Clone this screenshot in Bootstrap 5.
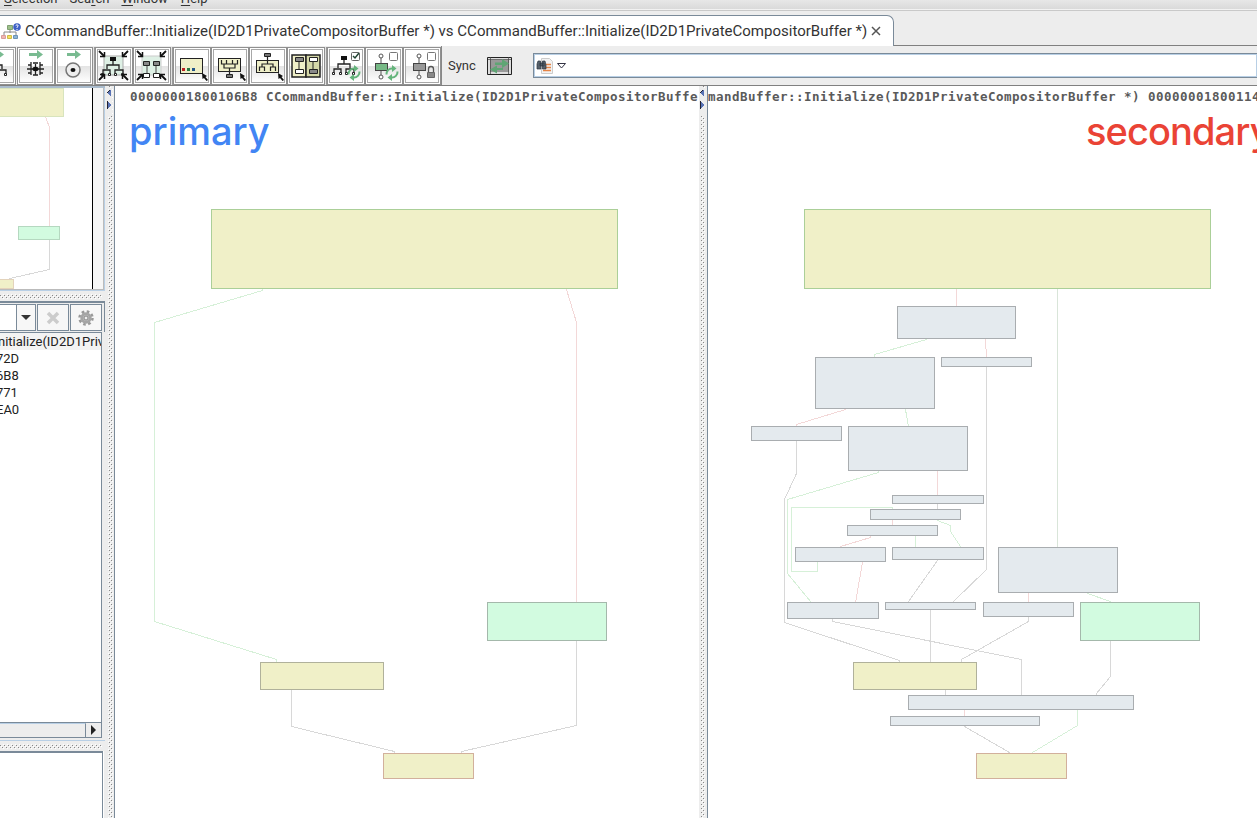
<!DOCTYPE html>
<html lang="en">
<head>
<meta charset="utf-8">
<title>Flow graph comparison</title>
<link href="https://cdn.jsdelivr.net/npm/bootstrap@5.3.0/dist/css/bootstrap.min.css" rel="stylesheet">
<style>
body{height:818px;overflow:hidden;background:#ededed;font-family:Roboto,"Liberation Sans",sans-serif;color:#333;font-size:13px}
svg{display:block;flex:none}
.menus{height:11px;flex:none;background:linear-gradient(#e7e7e7,#dadada 9px,#f2f2f2 9px);border-bottom:1px solid #c9c9c9;line-height:15px}
.menus span{position:relative;top:-9px;white-space:nowrap}
.menus u{text-underline-offset:2px}
.tabrow{height:35px;flex:none;border-bottom:1px solid #808080;padding-top:4px}
.doc-tab{height:31px;width:894px;background:#fff;border-top:1px solid #7a8a99;border-right:1px solid #7a8a99;border-top-right-radius:7px;margin-bottom:-1px;color:#333}
.doc-title{font-size:15.020px;margin-left:4px;white-space:nowrap;width:842px;line-height:20px}
.tools{height:40px;flex:none;border-bottom:1px solid #808080}
.tool{width:38px;height:38px;flex:none;border:1px solid #909090;box-shadow:inset 0 0 0 1px #fff,inset 0 0 0 2px #a8a8a8;background:linear-gradient(#fff 0,#fff 49%,#e4e4e4 51%,#fff 96%);padding:0}
.tool svg{margin:-1px}
.sep{width:2px;height:38px;background:#e2e2e2;border-right:1px solid #999;flex:none}
.query{height:25px;border:1px solid #7a8a99;border-right:0;background:#fff;box-shadow:inset 0 0 0 1px #b8cfe5;margin-left:19px}
.side{width:105px;flex:none}
.overview{height:205px;flex:none;background:#fff;border-top:2px solid #aabccd;border-bottom:1px solid #b8cfe5}
.split-v{width:10px;flex:none;border-right:1px solid #7a8a99;background:#ededed}
.split-v.thin{width:9px}
.filter{height:31px;flex:none;border-top:2px solid #7a8a99;border-right:1px solid #7a8a99;padding-top:1px}
.cell{height:27px;border:1px solid #7a8a99;background:#f7f7f7;flex:none;display:flex;align-items:center;justify-content:center}
.found{border-top:1px solid #7a8a99;border-right:1px solid #7a8a99;background:#fff;width:102px;color:#222;font-size:13px;overflow:hidden;white-space:nowrap}
.found div{height:17px;line-height:17px;text-indent:-4px}
.found div:first-child{background:#f3f3f3;text-indent:-2px}
.edge-r{border-right:1px solid #7a8a99;box-shadow:1px 0 0 #fff}
.graph{background:#fff;overflow:hidden}
.addr{font:bold 12.5px/16px "DejaVu Sans Mono",monospace;letter-spacing:.475px;color:#5a5a5a;white-space:nowrap;height:21px;padding-top:3px}
.which{font:500 38px/49px Inter,"Open Sans",sans-serif;height:49px;white-space:nowrap}
.n rect{stroke-width:1}
.k{fill:#e4eaee;stroke:#a9adb0}.y{fill:#f0f0c8;stroke:#b0b19b}.yg{fill:#f0f0c8;stroke:#abcf98}.yr{fill:#f0f0c8;stroke:#d2b09c}.g{fill:#d2fbe0;stroke:#a4b8ab}
.e,.e path{fill:none;stroke-linecap:square}.eg{stroke:#d6f0d8}.er{stroke:#f3d8d8}.ek{stroke:#d8d8d8}
</style>
</head>
<body class="d-flex flex-column">
<svg width="0" height="0" class="position-absolute"><defs>
<pattern id="dots" width="4" height="4" patternUnits="userSpaceOnUse"><rect width="4" height="4" fill="#eee"/><path d="M0 0h1v1H0zM2 2h1v1H2z" fill="#888"/><path d="M1 1h1v1H1zM3 3h1v1H3z" fill="#fff"/></pattern>
<g id="corners" fill="none" stroke="#111" stroke-width="1.800"><path d="M4 4l5 5M33 4l-5 5M4 33l5-5M33 33l-5-5"/><path stroke-width="1.500" d="M9.500 5v4.500H5M27.500 5v4.500H32M9.500 32v-4.500H5M27.500 32v-4.500H32"/></g>
<g id="tree" fill="none" stroke="#222" stroke-width="1.300"><path d="M18 14v4M12 22v-4h12v4M8 27v-4h7v4M20 27v-4h8v4"/><path fill="#111" stroke="none" d="M15 10h6v4h-6z"/><path fill="#fff" stroke-width="1" d="M6.500 26.500h2v2h-2zM13.500 26.500h2v2h-2zM19.500 26.500h2v2h-2zM26.500 26.500h2v2h-2z"/></g>
<g id="cycle" fill="none" stroke="#65b47c" stroke-width="2"><path d="M21.500 27.500a5.500 5.500 0 0 1 6-6M32.500 24.500a5.500 5.500 0 0 1-6 6"/><path fill="#65b47c" stroke="none" d="M27 18l4.500 3.500L27 25zM27 34l-4.500-3.500L27 27z"/></g>
<path id="arrow" d="M12 6h8V3l6 4.500-6 4.500V9h-8z" fill="#79bb91"/>
<path id="pointer" d="M29 26l5 3-1.500 1 2.500 3-1.500 1-2.500-3-1.500 1z" fill="#111"/>
</defs></svg>

<nav class="menus d-flex overflow-hidden">
<span style="margin-left:4px"><u>S</u>election</span><span style="margin-left:12px">Sea<u>r</u>ch</span><span style="margin-left:12px"><u>W</u>indow</span><span style="margin-left:13px"><u>H</u>elp</span>
</nav>

<div class="tabrow"><div class="doc-tab d-flex align-items-center">
<svg width="21" height="20" viewBox="0 0 21 20"><path d="M10 8v4M4 14v-3h12v3" stroke="#888" fill="none"/><path d="M7.500 4.500h5v4h-5z" fill="#9dbf8a" stroke="#7fa072"/><path d="M1.500 14.500h4v3h-4z" fill="#f0b6b2" stroke="#d99d9b"/><path d="M7.500 14.500h4v3h-4z" fill="#f5e45c" stroke="#cdb94a"/><path d="M13.500 14.500h4v3h-4z" fill="#8fb5d7" stroke="#6d93b6"/><circle cx="17" cy="6" r="3.800" fill="#3d5fc4"/><path d="M15.700 4.500q1.300-1.500 2.500 0 0 1-1.200 1.700v.8M17 8v1" stroke="#fff" fill="none"/></svg>
<span class="doc-title">CCommandBuffer::Initialize(ID2D1PrivateCompositorBuffer *) vs CCommandBuffer::Initialize(ID2D1PrivateCompositorBuffer *)</span>
<svg width="18" height="12" viewBox="0 0 18 12"><path d="M5 2l8 8M13 2l-8 8" stroke="#555" stroke-width="1.500"/></svg>
</div></div>

<div class="tools d-flex align-items-center">
<button class="tool" style="margin-left:-22px"><svg width="38" height="38"><use href="#arrow"/><use href="#tree"/></svg></button>
<button class="tool" style="margin-left:1px"><svg width="38" height="38"><use href="#arrow"/><path d="M10 22h17M18.500 17v11M14 15v13M23 15v13M11 18h3M23 18h3M11 26h3M23 26h3M16 28h5M16 16h5" fill="none" stroke="#222" stroke-width="1.300"/><ellipse cx="18.500" cy="22" rx="3" ry="2.200" fill="#111"/></svg></button>
<button class="tool"><svg width="38" height="38"><use href="#arrow"/><circle cx="18" cy="23" r="7" fill="#eee" stroke="#777" stroke-width="1.500"/><ellipse cx="18" cy="23" rx="2.500" ry="2" fill="#111"/></svg></button>
<div class="sep"></div>
<button class="tool"><svg width="38" height="38"><rect x="9" y="9" width="19" height="19" fill="#def0e5" stroke="#aaa"/><use href="#tree"/><use href="#corners"/></svg></button>
<button class="tool"><svg width="38" height="38"><rect x="9" y="9" width="19" height="19" fill="#def0e5" stroke="#ccc"/><path d="M14 18v9M23 18v9" stroke="#444"/><g stroke="#222"><path fill="#888" d="M10.500 14.500h6v4h-6zM20.500 14.500h6v4h-6z"/><path fill="#fff" d="M10.500 26.500h6v4h-6zM20.500 26.500h6v4h-6z"/></g><use href="#corners"/></svg></button>
<div class="sep"></div>
<button class="tool"><svg width="38" height="38"><rect x="7.500" y="11.500" width="22" height="15" fill="#efefc8" stroke="#222"/><path d="M9 21h3v3H9z" fill="#b22"/><path d="M14 21h3v3h-3z" fill="#2a7c42"/><path d="M19 21h3v3h-3z" fill="#258"/><use href="#pointer"/></svg></button>
<button class="tool"><svg width="38" height="38"><rect x="7.500" y="11.500" width="22" height="13" fill="#efefc8" stroke="#222"/><path d="M10.500 13v4h16v-4M15.500 13v4M21.500 13v4M13 17v4h11v-4M18.500 21v6" fill="none" stroke="#222" stroke-width="1.200"/><path d="M15.500 27.500h6v3h-6z" fill="#777" stroke="#222"/><use href="#pointer"/></svg></button>
<button class="tool"><svg width="38" height="38"><rect x="7.500" y="13.500" width="22" height="12" fill="#efefc8" stroke="#222"/><path d="M18.500 10v7M13 20v-3h11v3M10.500 24v-4h5v4M21.500 24v-4h5v4" fill="none" stroke="#222" stroke-width="1.200"/><path d="M15.500 6.500h6v3h-6z" fill="#777" stroke="#222"/><use href="#pointer"/></svg></button>
<button class="tool"><svg width="38" height="38"><rect x="5" y="8" width="14" height="22" fill="#efefc8" stroke="#222" stroke-width="1.500"/><rect x="19" y="8" width="14" height="22" fill="#d5d8a8" stroke="#222" stroke-width="1.500"/><path d="M12 14v9M26 14v9" stroke="#222"/><g stroke="#222"><path fill="#888" d="M8.500 10.500h8v4h-8zM22.500 22.500h8v4h-8z"/><path fill="#fff" d="M8.500 22.500h8v4h-8zM22.500 10.500h8v4h-8z"/></g></svg></button>
<div class="sep"></div>
<button class="tool"><svg width="38" height="38"><g transform="translate(-1 -1)"><use href="#tree"/></g><rect x="24.500" y="5.500" width="8" height="8" rx="1" fill="#fff" stroke="#666"/><path d="M26 9l2 2 4-5" fill="none" stroke="#243" stroke-width="1.500"/><use href="#cycle"/></svg></button>
<button class="tool"><svg width="38" height="38"><path d="M16 8v23" stroke="#555"/><circle cx="16" cy="9" r="2" fill="#fff" stroke="#555"/><circle cx="16" cy="30" r="2" fill="#fff" stroke="#555"/><rect x="10.500" y="16.500" width="12" height="7" fill="#77b986" stroke="#444"/><rect x="24.500" y="5.500" width="8" height="8" rx="1" fill="#fff" stroke="#777"/><use href="#cycle"/></svg></button>
<button class="tool"><svg width="38" height="38"><path d="M16 8v23" stroke="#555"/><circle cx="16" cy="9" r="2" fill="#fff" stroke="#555"/><circle cx="16" cy="30" r="2" fill="#fff" stroke="#555"/><rect x="10.500" y="16.500" width="12" height="7" fill="#999" stroke="#444"/><rect x="24.500" y="5.500" width="8" height="8" rx="1" fill="#fff" stroke="#777"/><path d="M25.500 25v-3a2.500 2.500 0 0 1 5 0v3" fill="none" stroke="#555" stroke-width="1.300"/><path d="M24.500 25.500h7v5h-7z" fill="#888" stroke="#666"/></svg></button>
<div style="border-left:1px solid #888" class="h-100"></div>
<span style="font-size:13px;width:39px;margin-left:6px">Sync</span>
<svg width="27" height="20" viewBox="1 0 27 20"><path d="M1.500 1.500h24v17h-24z" fill="#ddd" stroke="#222"/><path d="M4 4h19v12H4z" fill="#999"/><path d="M2 3.500h23M4.500 1v17M22.500 1v17" stroke="#444" stroke-width=".7"/><path d="M9 6.500h7V3l7 4.500-7 4.500V9H9zM17 14h-6v3.500L4 13.500 11 9.500V12h6z" fill="#5fa574"/></svg>
<div class="query flex-grow-1 d-flex align-items-center">
<svg width="36" height="21" viewBox="0 0 36 21"><path d="M7.500 3.500h8l3 3v12h-11z" fill="#f3f3f3" stroke="#ccc"/><path d="M9 9.500h8M9 12.500h8M9 15.500h8" stroke="#e68445" stroke-width="1.300"/><path d="M4 6h2.500l.5 8H3V9zM8.500 6H11l1 4v4H8.500zM6 8h4v3H6z" fill="#57616b" stroke="#2b3540" stroke-width=".7"/><path d="M23.500 8.500h8l-4 4.500z" fill="#fff" stroke="#334"/></svg>
</div>
</div>

<main class="d-flex flex-grow-1 overflow-hidden">
<aside class="side d-flex flex-column">
<div class="overview"><svg width="105" height="202" viewBox="0 88 105 202" shape-rendering="crispEdges"><path d="M93 88h10v202H93z" fill="#f6f6f6"/><path d="M92.500 88v202" stroke="#000"/><path d="M103.500 88v202" stroke="#bbb"/><path d="M104.500 88v202" stroke="#b8cfe5"/><path d="M0 289.500h104" stroke="#bbb"/><g transform="translate(.5 .5)"><path class="e er" d="M45 116l4 11v99"/><path class="e ek" d="M49 239v30l-40 9v2"/><rect x="-5" y="88" width="68" height="28" fill="#f0f0c8" stroke="#d8e4bd"/><rect x="18" y="226" width="41" height="13" fill="#d2fbe0" stroke="#b5d8c0"/><rect x="-5" y="279" width="18" height="9" fill="#f0f0c8" stroke="#e3d3bb"/></g></svg></div>
<svg width="105" height="10" shape-rendering="crispEdges"><path fill="#ededed" d="M0 0h105v10H0z"/><path fill="url(#dots)" d="M0 3h102v5H0z"/></svg>
<div class="filter d-flex align-items-start">
<div class="cell border-start-0" style="width:17px;background:#fff"></div><div class="cell" style="width:20px;margin-left:-1px"><svg width="12" height="7"><path d="M1 1h10L6 6z" fill="#333"/></svg></div>
<div class="cell" style="width:32px;margin-left:1px"><svg width="14" height="14"><path d="M2 2l10 10M12 2L2 12" stroke="#ccc" stroke-width="3.500"/></svg></div>
<div class="cell" style="width:32px;margin-left:1px"><svg width="18" height="18" viewBox="-9 -9 18 18"><circle r="6.500" fill="none" stroke="#999" stroke-width="2.500" stroke-dasharray="2.600 2.500"/><circle r="4.200" fill="#ccc" stroke="#a5a5a5" stroke-width="3"/><circle r="2" fill="#eee" stroke="#888"/></svg></div>
</div>
<div class="found" style="height:390px"><div>nitialize(ID2D1Priv</div><div>72D</div><div>6B8</div><div>771</div><div>EA0</div></div>
<div class="d-flex" style="height:16px;flex:none;width:102px;border:1px solid #7a8a99;border-left:0"><div style="width:86px;border-top:1px solid #b8cfe5;border-right:1px solid #7a8a99"></div><svg width="15" height="14"><path d="M5 2l5 5-5 5z" fill="#222"/></svg></div>
<div style="height:3px;flex:none;border-bottom:1px solid #b8cfe5"></div>
<svg width="105" height="10" shape-rendering="crispEdges"><path fill="#ededed" d="M0 0h105v10H0z"/><path fill="url(#dots)" d="M0 3h102v5H0z"/></svg>
<div class="flex-grow-1 bg-white edge-r" style="width:103px;border-top:2px solid #7a8a99"></div>
</aside>
<div class="split-v"><svg width="9" height="732" shape-rendering="crispEdges"><path fill="url(#dots)" d="M3 0h5v732H3z"/><path d="M2 2h5v28H2z" fill="#ededed"/><path d="M6 3v8L2 7zM2 15l4 4-4 4z" fill="#5872b5"/><path d="M2.500 15v8M5 4L2 7" stroke="#223"/></svg></div>

<section class="graph" style="width:584px;flex:none">
<div class="addr" style="padding-left:15px">00000001800106B8 CCommandBuffer::Initialize(ID2D1PrivateCompositorBuffer *)</div>
<div class="which" style="color:#4285f4;padding-left:14px">primary</div>
<svg width="584" height="662" viewBox="115 156 584 662" shape-rendering="crispEdges"><g transform="translate(.5 .5)">
<path class="e eg" d="M262 289v1L154 322v299l122 38v3"/><path class="e er" d="M566 289l10 33v280"/><path class="e ek" d="M576 641v84l-115 26v2M291 690v36l103 25v2"/>
<g class="n"><rect class="yg" x="211" y="209" width="406" height="79"/><rect class="g" x="487" y="602" width="119" height="38"/><rect class="y" x="260" y="662" width="123" height="27"/><rect class="yr" x="383" y="753" width="90" height="25"/></g>
</g></svg>
</section>
<div class="split-v thin"><svg width="8" height="732" shape-rendering="crispEdges"><path fill="url(#dots)" d="M2 0h4v732H2z"/><path d="M1 2h5v28H1z" fill="#ededed"/><path d="M5 3v8L1 7zM1 15l4 4-4 4z" fill="#5872b5"/><path d="M1.500 15v8M4 4L1 7" stroke="#223"/></svg></div>

<section class="graph flex-grow-1">
<div class="addr">mandBuffer::Initialize(ID2D1PrivateCompositorBuffer *) 0000000180011460</div>
<div class="which" style="color:#ea4335;padding-left:378px;letter-spacing:-.9px">secondary</div>
<svg width="549" height="662" viewBox="708 156 549 662" shape-rendering="crispEdges"><g transform="translate(.5 .5)">
<g class="e er"><path d="M956 289v17M985 338v9l1 3v7M845 409l-49 15v2M937 471v24M892 520v5M870 536v1l-30 9v1M862 562l-7 40M1028 593v9M964 710v6"/></g>
<g class="e ek"><path d="M986 367v202l-33 32v1M796 441v32l-12 26v123l115 38v3M937 504v5M937 560l-29 41v1M930 610v52M832 619v2l189 38v36M1028 617v4l-67 38v3M1110 641v35l-14 17v2M945 690v5M964 726l45 26v1"/></g>
<g class="e eg"><path d="M1057 289v258" stroke="#d9e5d9"/><path d="M926 339l-52 15v3M905 409l3 17M878 471v1l-91 27v74l23 28v1M892 509v-2h-101v64h26v-9M937 520l13 5v6l10 15v1M915 536v11M1087 593l23 8v1M1077 710v15l-45 27v1"/></g>
<g class="n"><rect class="yg" x="804" y="209" width="406" height="79"/><g class="k"><rect x="897" y="306" width="118" height="32"/><rect x="815" y="357" width="119" height="51"/><rect x="941" y="357" width="90" height="9"/><rect x="751" y="426" width="90" height="14"/><rect x="848" y="426" width="119" height="44"/><rect x="892" y="495" width="91" height="8"/><rect x="870" y="509" width="90" height="10"/><rect x="847" y="525" width="90" height="10"/><rect x="795" y="547" width="90" height="14"/><rect x="892" y="547" width="91" height="12"/><rect x="998" y="547" width="119" height="45"/><rect x="787" y="602" width="91" height="16"/><rect x="885" y="602" width="90" height="7"/><rect x="983" y="602" width="90" height="14"/><rect x="908" y="695" width="225" height="14"/><rect x="890" y="716" width="149" height="9"/></g><rect class="g" x="1080" y="602" width="119" height="38"/><rect class="y" x="853" y="662" width="123" height="27"/><rect class="yr" x="976" y="753" width="90" height="25"/></g>
</g></svg>
</section>
</main>
<script src="https://cdn.jsdelivr.net/npm/bootstrap@5.3.0/dist/js/bootstrap.bundle.min.js"></script>
</body>
</html>
